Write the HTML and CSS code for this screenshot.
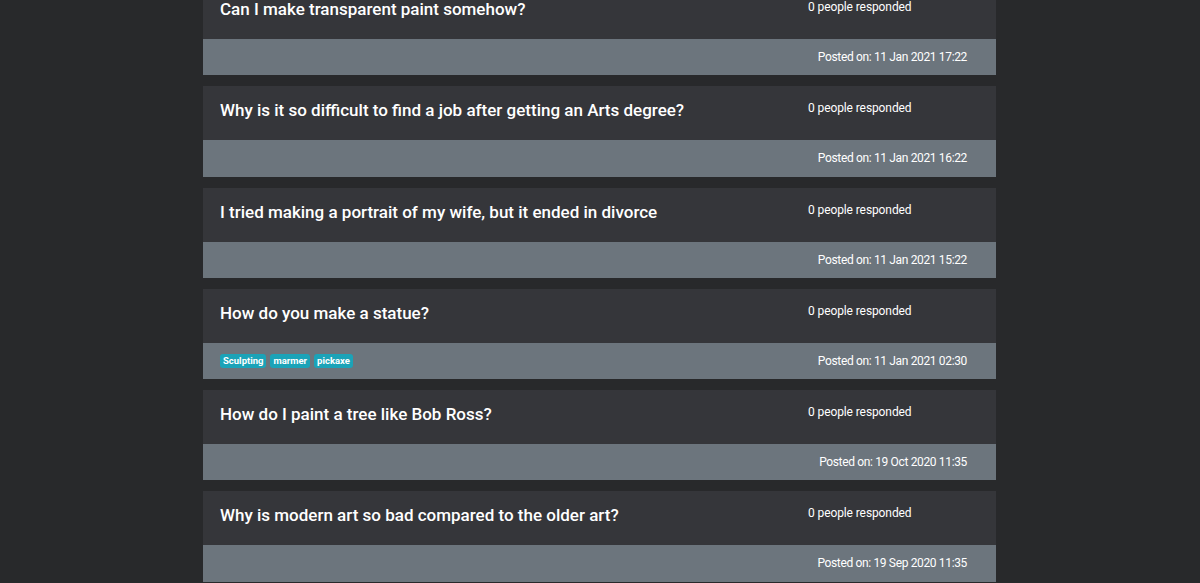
FILE: index.html
```html
<!DOCTYPE html>
<html>
<head>
<meta charset="utf-8">
<link rel="stylesheet" href="styles.css">
</head>
<body>
<main class="list">
  <article class="card">
    <div class="card-head"><h5 class="title">Can I make transparent paint somehow?</h5><span class="resp">0 people responded</span></div>
    <div class="card-foot"><div class="tags"></div><span class="posted">Posted on: 11 Jan 2021 17:22</span></div>
  </article>
  <article class="card">
    <div class="card-head"><h5 class="title">Why is it so difficult to find a job after getting an Arts degree?</h5><span class="resp">0 people responded</span></div>
    <div class="card-foot"><div class="tags"></div><span class="posted">Posted on: 11 Jan 2021 16:22</span></div>
  </article>
  <article class="card">
    <div class="card-head"><h5 class="title">I tried making a portrait of my wife, but it ended in divorce</h5><span class="resp">0 people responded</span></div>
    <div class="card-foot"><div class="tags"></div><span class="posted">Posted on: 11 Jan 2021 15:22</span></div>
  </article>
  <article class="card">
    <div class="card-head"><h5 class="title">How do you make a statue?</h5><span class="resp">0 people responded</span></div>
    <div class="card-foot"><div class="tags"><span class="tag">Sculpting</span><span class="tag">marmer</span><span class="tag">pickaxe</span></div><span class="posted">Posted on: 11 Jan 2021 02:30</span></div>
  </article>
  <article class="card">
    <div class="card-head"><h5 class="title">How do I paint a tree like Bob Ross?</h5><span class="resp">0 people responded</span></div>
    <div class="card-foot"><div class="tags"></div><span class="posted">Posted on: 19 Oct 2020 11:35</span></div>
  </article>
  <article class="card">
    <div class="card-head"><h5 class="title">Why is modern art so bad compared to the older art?</h5><span class="resp">0 people responded</span></div>
    <div class="card-foot"><div class="tags"></div><span class="posted">Posted on: 19 Sep 2020 11:35</span></div>
  </article>
</main>
</body>
</html>
```

FILE: styles.css
```css
html, body {
  margin: 0;
  padding: 0;
  height: 100%;
  overflow: hidden;
}
body {
  background: #28292b;
  font-family: Roboto, "Liberation Sans", sans-serif;
  color: #fff;
}
.list {
  width: 793px;
  margin: -15px 0 0 203px;
  display: flex;
  flex-direction: column;
  gap: 11px;
}
.card {
  display: flex;
  flex-direction: column;
}
.card-head {
  background: #35363a;
  height: 54px;
  display: flex;
  align-items: flex-start;
  padding: 0 16px 0 17px;
  box-sizing: border-box;
}
.title {
  margin: 0;
  padding-top: 13px;
  font-size: 17px;
  font-weight: 500;
  line-height: 22px;
  flex: 1;
}
.resp {
  width: 172px;
  padding-top: 15px;
  font-size: 12px;
  line-height: 15px;
  letter-spacing: -0.1px;
}
.card-foot {
  background: #6c757d;
  height: 36.25px;
  display: flex;
  align-items: center;
  justify-content: space-between;
  padding: 0 29px 0 17px;
  box-sizing: border-box;
}
.tags {
  display: flex;
  gap: 4px;
}
.tag {
  background: #1ba3b8;
  color: #fff;
  font-size: 9.5px;
  font-weight: 700;
  line-height: 14px;
  padding: 0 3px;
  border-radius: 3px;
}
.posted {
  font-size: 12px;
  line-height: 16px;
  letter-spacing: -0.35px;
}
```
